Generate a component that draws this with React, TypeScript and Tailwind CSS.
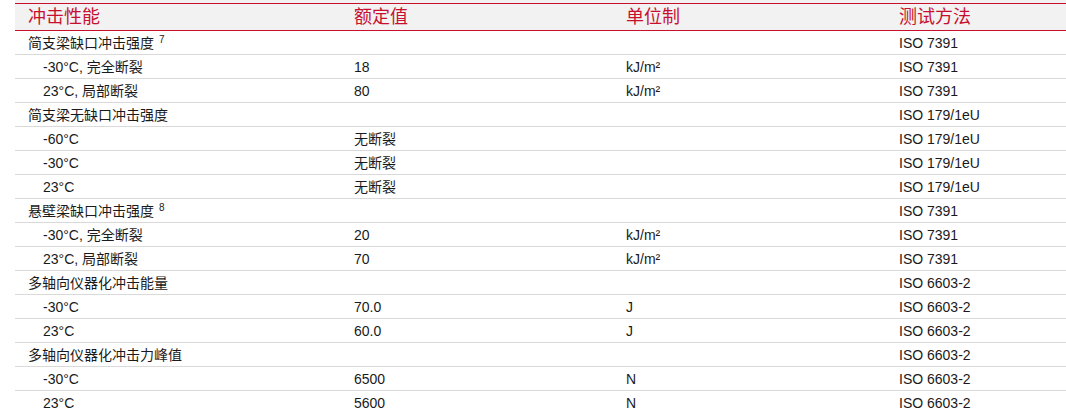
type Row = { label: string; sup?: string; sub?: boolean; value?: string; unit?: string; method: string };

const rows: Row[] = [
  { label: "简支梁缺口冲击强度", sup: "7", method: "ISO 7391" },
  { label: "-30°C, 完全断裂", sub: true, value: "18", unit: "kJ/m²", method: "ISO 7391" },
  { label: "23°C, 局部断裂", sub: true, value: "80", unit: "kJ/m²", method: "ISO 7391" },
  { label: "简支梁无缺口冲击强度", method: "ISO 179/1eU" },
  { label: "-60°C", sub: true, value: "无断裂", method: "ISO 179/1eU" },
  { label: "-30°C", sub: true, value: "无断裂", method: "ISO 179/1eU" },
  { label: "23°C", sub: true, value: "无断裂", method: "ISO 179/1eU" },
  { label: "悬壁梁缺口冲击强度", sup: "8", method: "ISO 7391" },
  { label: "-30°C, 完全断裂", sub: true, value: "20", unit: "kJ/m²", method: "ISO 7391" },
  { label: "23°C, 局部断裂", sub: true, value: "70", unit: "kJ/m²", method: "ISO 7391" },
  { label: "多轴向仪器化冲击能量", method: "ISO 6603-2" },
  { label: "-30°C", sub: true, value: "70.0", unit: "J", method: "ISO 6603-2" },
  { label: "23°C", sub: true, value: "60.0", unit: "J", method: "ISO 6603-2" },
  { label: "多轴向仪器化冲击力峰值", method: "ISO 6603-2" },
  { label: "-30°C", sub: true, value: "6500", unit: "N", method: "ISO 6603-2" },
  { label: "23°C", sub: true, value: "5600", unit: "N", method: "ISO 6603-2" },
];

const cols = "grid grid-cols-[326px_272px_273px_1fr]";

export default function App() {
  return (
    <div
      className="w-[1066px] h-[413px] overflow-hidden bg-white pl-[15px]"
      style={{ fontFamily: '"Liberation Sans", "Noto Sans CJK SC", sans-serif' }}
    >
      {/* Header */}
      <div className="bg-[#f2f2f2] pt-[3px]">
        <div className={`${cols} h-[28px] border-y border-[#c8102e] text-[18px] leading-[26px] text-[#c8102e]`}>
          <div className="pl-[13px]">冲击性能</div>
          <div className="pl-[13px]">额定值</div>
          <div className="pl-[13px]">单位制</div>
          <div className="pl-[13px]">测试方法</div>
        </div>
      </div>

      {/* Body */}
      {rows.map((r, i) => (
        <div key={i} className={`${cols} h-[24px] pt-[1px] border-b border-[#d9d9d9] text-[14px] leading-[22px] text-[#1a1a1a]`}>
          <div className={r.sub ? "pl-[28px]" : "pl-[13px]"}>
            {r.label}
            {r.sup && <span className="ml-[5px] text-[10px] align-top relative -top-[3px]">{r.sup}</span>}
          </div>
          <div className="pl-[13px]">{r.value}</div>
          <div className="pl-[13px]">{r.unit}</div>
          <div className="pl-[13px]">{r.method}</div>
        </div>
      ))}
    </div>
  );
}
